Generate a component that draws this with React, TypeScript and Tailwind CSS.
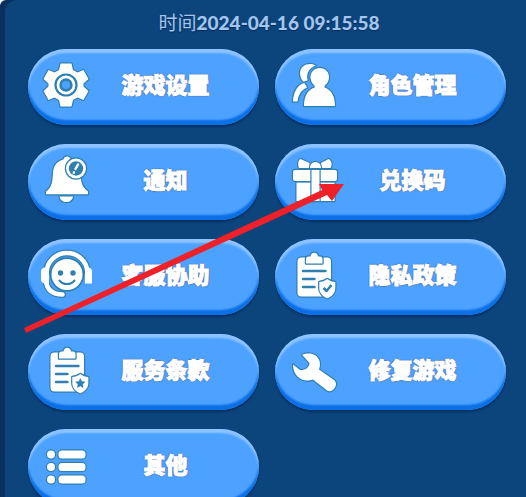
import type { ReactNode } from "react";

const LINE = "#2f7fb0";
const FACE = "#4da2ff";

function Icon({ children }: { children: ReactNode }) {
  return (
    <svg
      viewBox="0 0 44 44"
      className="h-11 w-11 shrink-0 overflow-visible [paint-order:stroke]"
      fill="white"
      stroke={LINE}
      strokeWidth={2.4}
      strokeLinejoin="round"
      aria-hidden="true"
    >
      {children}
    </svg>
  );
}

function GearIcon() {
  return (
    <Icon>
      <path d="M16.500 0.500h11l1.500 6.500 4.500 2.500 6-2.500 5 9-5 4.500v3l5 4.500-5 9-6-2.500-4.500 2.500-1.500 6.500h-11L15 37l-4.500-2.500-6 2.500-5-9 5-4.500v-3l-5-4.500 5-9 6 2.500L15 7z" />
      <circle cx="22" cy="22" r="10.500" fill="none" strokeWidth={2.200} />
      <circle cx="22" cy="22" r="5.400" fill={FACE} strokeWidth={2.600} className="[paint-order:fill]" />
    </Icon>
  );
}

function UsersIcon() {
  return (
    <Icon>
      <path d="M24.500 2.500C18-1 9.500 2 9 10c0 4 1.500 7 3.500 8.700l4.300-1.500c-2-5 .5-12 7.700-14.700z" />
      <path d="M13.500 20C7 21.500 2.500 28 2 38.500h4.500C7.500 31 10.500 27 16 24.500z" />
      <path d="M28.800 5c-5.500 0-9.300 4-9.300 9.200 0 3.500 1.700 6.300 4 8.300l.3 2C16.500 27 13 33 13 43h31c0-10-3.500-16-10.500-18.500l.3-2c2.500-2 4.200-4.800 4.200-8.300 0-5.200-3.700-9.200-9.200-9.200z" />
    </Icon>
  );
}

function BellIcon() {
  return (
    <Icon>
      <path d="M15.500 38.500h13.500c-.5 3.500-3.300 5.500-6.700 5.500s-6.300-2-6.800-5.500z" />
      <path d="M19.500 1.500c.5-4 6.500-4 7 0 6 2 9.500 6 10 13 .3 9 1 14 7.500 19v2.800H2v-2.800c6-4 6.500-10 7-19 .5-7 4-11.500 10.500-13z" />
      <circle cx="32" cy="10.500" r="10" />
      <circle cx="32" cy="10.500" r="7.200" fill={LINE} stroke="none" />
      <path d="M34 6.500 31.500 11M30 14.300l-.2.400" fill="none" stroke="white" strokeWidth={2.500} strokeLinecap="round" />
    </Icon>
  );
}

function GiftIcon() {
  return (
    <Icon>
      <path d="M18.500 5 9.500 1C7 2 6.500 7 8 10h11z" />
      <path d="M30 5 37.500 1c3 1 4 6 2 9h-10z" />
      <path d="M19 10c0-8 11-8 11 0z" />
      <path d="M5.500 24.500h38V43h-38z" />
      <rect x="2" y="12" width="44" height="11" rx="2" />
      <path d="M20.500 12h8v31h-8z" />
    </Icon>
  );
}

function SupportIcon() {
  return (
    <Icon>
      <g fill="none" strokeLinecap="round">
        <path d="M2.500 20a20.500 20 0 0 1 41 0M2 28c1 9 7 13.500 16.500 13.500" strokeWidth={7} />
        <path d="M2.500 20a20.500 20 0 0 1 41 0M2 28c1 9 7 13.500 16.500 13.500" stroke="white" strokeWidth={4.600} />
      </g>
      <path d="M5 14.500v16H1.500c-3 0-4.500-2-4.500-4v-8c0-2 1.500-4 4.500-4z" stroke="none" />
      <path d="M41 14.500h3.500c2 0 3.500 2 3.500 4v12h-7z" stroke="none" />
      <circle cx="23" cy="21.500" r="15.500" strokeWidth={3.500} />
      <circle cx="16.500" cy="20" r="2.700" fill={LINE} stroke="none" />
      <circle cx="29" cy="20" r="2.700" fill={LINE} stroke="none" />
      <path d="M15.500 27.500c4 4.800 11 4.800 15 0" fill="none" strokeWidth={2} strokeLinecap="round" />
    </Icon>
  );
}

function ClipboardIcon({ children }: { children: ReactNode }) {
  return (
    <Icon>
      <rect x="6.500" y="4.500" width="33.500" height="39" rx="4" />
      <path d="M15 10.500V6c0-1.500 1-2.500 2.500-2.500h2c.5-5 7-5 7.500 0h2c1.500 0 2.500 1 2.500 2.500v4.500z" />
      <path d="M12 18h22.500M12 26h11.500M12 34h11.500" fill="none" strokeWidth={2.400} strokeLinecap="round" />
      <path d="M36.300 26c2.700 2 5 2.700 8 3v6c0 5-3 8-8 10.500-5-2.500-8-5.500-8-10.500v-6c3-.3 5.300-1 8-3z" />
      {children}
    </Icon>
  );
}

function WrenchIcon() {
  return (
    <Icon>
      <path d="M11 6.800C18 4 26 5.500 28.500 13c.8 3 .5 6-.5 8.500l15 10.500c2.500 2 2.500 5 1 7.500-2 3.500-5.500 4.500-8 3L22 31.500C12 35 2 29 2 16.500l7 5.500c5 .5 9-2 9.500-7z" />
    </Icon>
  );
}

function ListIcon() {
  return (
    <Icon>
      {[11.500, 24, 36.500].map((y) => (
        <g key={y}>
          <circle cx="7" cy={y} r="4" />
          <rect x="14.500" y={y - 4} width="27" height="8" rx="3.500" />
        </g>
      ))}
    </Icon>
  );
}

const ITEMS = [
  { label: "游戏设置", icon: <GearIcon /> },
  { label: "角色管理", icon: <UsersIcon /> },
  { label: "通知", icon: <BellIcon /> },
  { label: "兑换码", icon: <GiftIcon /> },
  { label: "客服协助", icon: <SupportIcon /> },
  {
    label: "隐私政策",
    icon: (
      <ClipboardIcon>
        <path d="m32.500 35 3 3 5-6" fill="none" strokeWidth={2.500} />
      </ClipboardIcon>
    ),
  },
  {
    label: "服务条款",
    icon: (
      <ClipboardIcon>
        <path
          d="m36.300 30.500 1.400 3 3.300.4-2.400 2.300.6 3.300-2.900-1.600-2.900 1.600.6-3.300-2.400-2.300 3.300-.4z"
          fill={LINE}
          strokeWidth={0.5}
        />
      </ClipboardIcon>
    ),
  },
  { label: "修复游戏", icon: <WrenchIcon /> },
  { label: "其他", icon: <ListIcon /> },
];

function MenuButton({ label, icon }: { label: string; icon: ReactNode }) {
  return (
    <button className="flex h-19 items-center rounded-full bg-[#4da2ff] px-4 pb-1 shadow-[inset_0_4px_2px_#8ec3ff,inset_0_-5px_2px_#0b6fe6,0_2px_2px_#06305f]">
      {icon}
      <span className="flex-1 pb-1 text-center text-[22px] leading-8 font-black text-white [-webkit-text-stroke:1px_white] [text-shadow:1px_0_1px_#5270ac,-1px_0_1px_#5270ac,0_1px_1px_#5270ac,0_-1px_1px_#5270ac]">
        {label}
      </span>
    </button>
  );
}

export default function App() {
  return (
    <div className="h-screen bg-white font-['Noto_Sans_CJK_SC',sans-serif]">
      <div className="relative h-full overflow-hidden rounded-tl-md bg-[#08305f] pl-[5px]">
        <main className="h-full rounded-tl-xl bg-[#0c447c] pr-5 pl-[23px]">
          <p className="pt-2 pb-3 pl-1 text-center text-[19px] leading-7 text-[#a3c6ee] [text-shadow:0_1px_1px_#062c58]">
            时间<time className="font-['Lato','Noto_Sans_CJK_SC',sans-serif] font-black">2024-04-16 09:15:58</time>
          </p>
          <div className="grid grid-cols-2 gap-x-4 gap-y-[19px]">
            {ITEMS.map((item) => (
              <MenuButton key={item.label} label={item.label} icon={item.icon} />
            ))}
          </div>
        </main>

        {/* pointer to the redeem code entry */}
        <svg
          viewBox="0 0 526 497"
          className="pointer-events-none absolute top-0 left-0 w-full"
          fill="#ee2028"
          aria-hidden="true"
        >
          <path d="M24 328 322 190 319 184 344 184 332 201 327 195 26 333z" />
        </svg>
      </div>
    </div>
  );
}
